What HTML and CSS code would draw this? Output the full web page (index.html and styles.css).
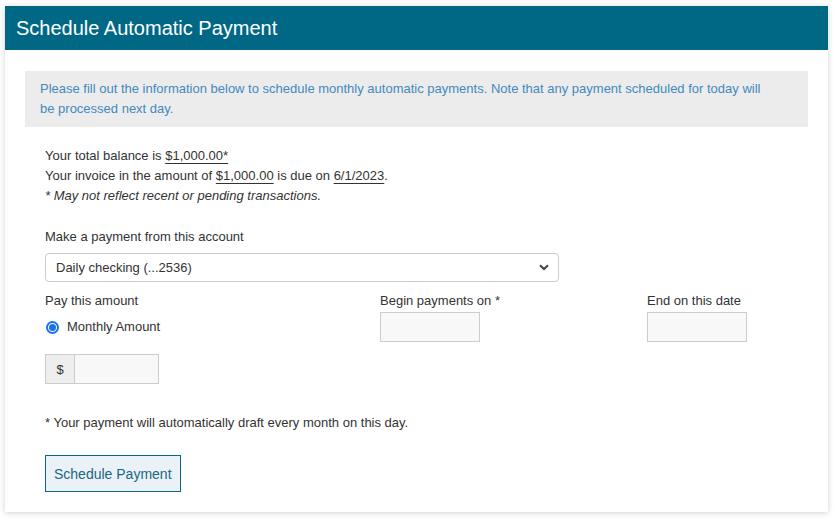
FILE: index.html
```html
<!DOCTYPE html>
<html lang="en">
<head>
  <meta charset="UTF-8" />
  <meta name="viewport" content="width=device-width, initial-scale=1.0" />
  <title>Schedule Automatic Payment</title>
  <link rel="stylesheet" href="styles.css">
</head>
<body>
  <div class="page">
    <div class="card">
      <div class="card-header">
        <h1>Schedule Automatic Payment</h1>
      </div>

      <div class="card-body">
        <div class="info">
          Please fill out the information below to schedule monthly automatic payments. Note that any payment scheduled for today will be processed next day.
        </div>

        <div class="form">
          <div class="balance">
            <div>Your total balance is <u>$1,000.00*</u></div>
            <div>Your invoice in the amount of <u>$1,000.00</u> is due on <u>6/1/2023</u>.</div>
            <div class="note"><em>* May not reflect recent or pending transactions.</em></div>
          </div>

          <div class="account">
            <label class="field-label">Make a payment from this account</label>
            <div class="select">
              <span>Daily checking (...2536)</span>
              <svg width="10" height="7" viewBox="0 0 10 7"><path d="M1 1.2 L5 5 L9 1.2" fill="none" stroke="#444" stroke-width="2"/></svg>
            </div>
          </div>

          <div class="fields">
            <div class="col">
              <label class="field-label">Pay this amount</label>
              <div class="radio-row">
                <span class="radio"><span class="dot"></span></span>
                <span>Monthly Amount</span>
              </div>
              <div class="money">
                <span class="addon">$</span>
                <span class="money-input"></span>
              </div>
            </div>
            <div class="col">
              <label class="field-label">Begin payments on *</label>
              <div class="date-input"></div>
            </div>
            <div class="col">
              <label class="field-label">End on this date</label>
              <div class="date-input"></div>
            </div>
          </div>

          <p class="draft">* Your payment will automatically draft every month on this day.</p>

          <button class="submit">Schedule Payment</button>
        </div>
      </div>
    </div>
  </div>
</body>
</html>
```

FILE: styles.css
```css
body {
  margin: 0;
  font-family: "Liberation Sans", Arial, sans-serif;
  font-size: 13px;
  color: #333;
  background: #fff;
}

.page {
  padding: 6px 6px 6px 5px;
}

.card {
  background: #fff;
  box-shadow: 0 1px 6px rgba(0, 0, 0, 0.18);
  height: 506px;
}

.card-header {
  background: #006884;
  height: 44px;
  display: flex;
  align-items: center;
  padding-left: 11px;
}

.card-header h1 {
  margin: 0;
  color: #fff;
  font-size: 20px;
  font-weight: normal;
}

.card-body {
  padding: 21px 20px 0 20px;
}

.info {
  background: #ececec;
  color: #4389bd;
  line-height: 20px;
  padding: 8px 40px 8px 15px;
}

.form {
  padding: 19px 20px 0 20px;
}

.balance {
  line-height: 20px;
}

.balance u {
  text-underline-offset: 3px;
}

.account {
  margin-top: 21px;
}

.field-label {
  display: block;
  line-height: 20px;
}

.select {
  margin-top: 6px;
  width: 514px;
  height: 29px;
  box-sizing: border-box;
  border: 1px solid #ccc;
  border-radius: 4px;
  display: flex;
  align-items: center;
  justify-content: space-between;
  padding: 0 9px 0 10px;
}

.fields {
  margin-top: 9px;
  display: grid;
  grid-template-columns: 335px 267px 1fr;
}

.date-input {
  margin-top: 1px;
  width: 100px;
  height: 30px;
  box-sizing: border-box;
  border: 1px solid #ccc;
  background: #f8f8f8;
}

.radio-row {
  display: flex;
  align-items: center;
  gap: 8px;
  margin-top: 6px;
  line-height: 20px;
}

.radio {
  width: 13px;
  height: 13px;
  box-sizing: border-box;
  border: 2px solid #1a73e8;
  border-radius: 50%;
  display: flex;
  align-items: center;
  justify-content: center;
  margin-left: 1px;
}

.dot {
  width: 7px;
  height: 7px;
  border-radius: 50%;
  background: #1a73e8;
}

.money {
  display: flex;
  margin-top: 17px;
  height: 30px;
  width: 114px;
}

.addon {
  width: 29px;
  box-sizing: border-box;
  border: 1px solid #ccc;
  border-right: none;
  background: #eee;
  display: flex;
  align-items: center;
  justify-content: center;
}

.money-input {
  flex: 1;
  border: 1px solid #ccc;
  background: #f8f8f8;
}

.draft {
  margin: 29px 0 0 0;
  line-height: 20px;
}

.submit {
  margin-top: 22px;
  height: 37px;
  padding: 0 8px;
  font-family: inherit;
  font-size: 14px;
  color: #1a6780;
  background: #eaf2f8;
  border: 1px solid #0a6880;
  cursor: pointer;
}
```
